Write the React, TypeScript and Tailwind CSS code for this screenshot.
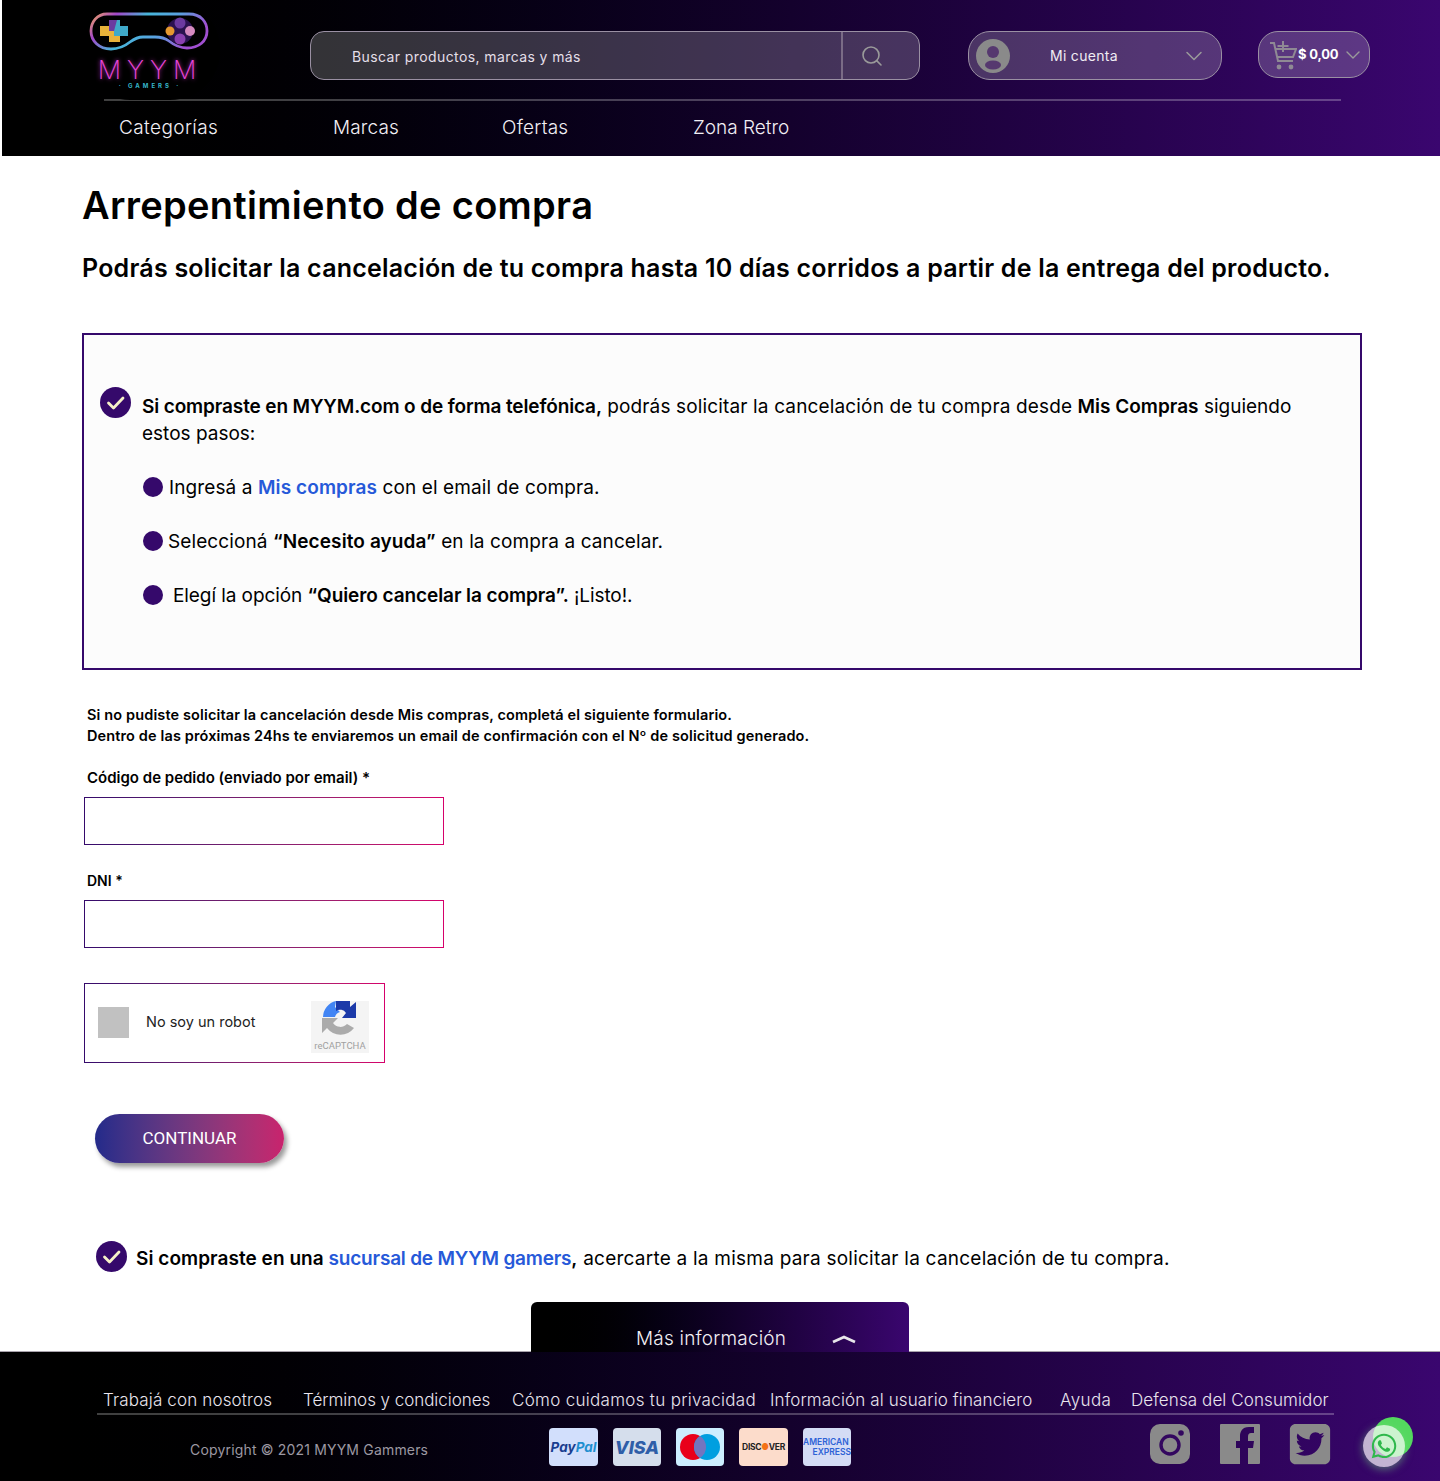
import React from 'react';
import { ChevronDown, Search } from 'lucide-react';
import { FaSquareTwitter, FaWhatsapp } from 'react-icons/fa6';

const navLinks = [
  { label: 'Categorías', className: 'w-[214px] tracking-[0.4px]' },
  { label: 'Marcas', className: 'w-[169px] tracking-[0.15px]' },
  { label: 'Ofertas', className: 'w-[191px] tracking-[0.25px]' },
  { label: 'Zona Retro', className: '' },
];

const footerLinks = [
  { label: 'Trabajá con nosotros', className: 'w-[200px] tracking-[0.15px]' },
  { label: 'Términos y condiciones', className: 'w-[209px] -tracking-[0.05px]' },
  { label: 'Cómo cuidamos tu privacidad', className: 'w-[258px] tracking-[0.3px]' },
  { label: 'Información al usuario financiero', className: 'w-[290px] tracking-[0.12px]' },
  { label: 'Ayuda', className: 'w-[71px] tracking-[0.4px]' },
  { label: 'Defensa del Consumidor', className: 'tracking-[0.1px]' },
];

const Logo = () => (
  <div className="flex h-[100px] w-[140px] shrink-0 flex-col items-center rounded-full bg-black pt-[11px]">
    <svg width="122" height="40" viewBox="0 0 122 40" fill="none">
      <defs>
        <linearGradient id="pad" x1="0" y1="0" x2="1" y2="0.3">
          <stop offset="0" stopColor="#f2a65a" />
          <stop offset="0.2" stopColor="#a347c9" />
          <stop offset="0.45" stopColor="#46b6d9" />
          <stop offset="0.7" stopColor="#5aa0e0" />
          <stop offset="1" stopColor="#a04fd0" />
        </linearGradient>
      </defs>
      <path
        d="M18 3 H100 C112 3 118 11 118 20 C118 30 110 37 98 37 C90 37 85 34 80 30 C76 27 72 26 66 26 H54 C48 26 45 28 41 31 C36 35 30 38 22 38 C10 38 2 30 2 20 C2 11 8 3 18 3 Z"
        stroke="url(#pad)"
        strokeWidth="2.8"
      />
      <path d="M20 9 H31 V15 H39 V25 H31 V31 H20 V25 H11 V15 H20 Z" fill="#e8b23a" />
      <path d="M25 9 H31 V15 H39 V25 H25 Z" fill="#3fa9c9" />
      <path d="M20 9 H28 L25 20 H20 Z" fill="#6b3aa0" />
      <circle cx="91" cy="20" r="13" fill="#2a1250" />
      <circle cx="91" cy="12" r="5.5" fill="#6b3aa0" />
      <circle cx="91" cy="28" r="5.5" fill="#8a3fb0" />
      <circle cx="81" cy="20" r="4.5" fill="#e5982f" />
      <circle cx="101" cy="20" r="5" fill="#d58ac0" />
    </svg>
    <div className="mt-[7px] text-[26px] leading-[24px] font-extralight tracking-[6px] text-[#e845d8] [text-shadow:0_0_4px_#c030c0]">
      MYYM
    </div>
    <div className="mt-[1px] text-[6px] leading-[6px] font-bold tracking-[3px] text-[#37b6c9]">· GAMERS ·</div>
  </div>
);

const UserIcon = () => (
  <svg width="34" height="34" viewBox="0 0 34 34">
    <circle cx="17" cy="17" r="17" fill="#8a8a8a" />
    <circle cx="17" cy="13" r="6" fill="#56386f" />
    <ellipse cx="17" cy="26" rx="8" ry="4.5" fill="#56386f" />
  </svg>
);

const CartIcon = () => (
  <svg width="28" height="30" viewBox="0 0 28 30" fill="none" stroke="#8f8a94" strokeWidth="2">
    <path d="M1 3 H5 L9 21 H24" />
    <path d="M6 9 H27 L24 17 H8" />
    <path d="M14 1 V12 M8.5 6 H19.5" />
    <circle cx="10" cy="27" r="2.4" fill="#8f8a94" stroke="none" />
    <circle cx="22" cy="27" r="2.4" fill="#8f8a94" stroke="none" />
  </svg>
);

const CheckBadge = () => (
  <svg width="31" height="31" viewBox="0 0 31 31" className="shrink-0">
    <circle cx="15.5" cy="15.5" r="15.5" fill="#35096b" />
    <path d="M8.5 16 L13.5 21 L23 11" fill="none" stroke="#f6f1c8" strokeWidth="2.8" strokeLinecap="round" strokeLinejoin="round" />
  </svg>
);

const Step = ({ children, gap }: { children: React.ReactNode; gap: string }) => (
  <div className={`flex h-[54px] items-center ${gap}`}>
    <span className="size-5 shrink-0 rounded-full bg-[#35096b]" />
    <p>{children}</p>
  </div>
);

const GradientField = ({ className }: { className: string }) => (
  <div className={`ml-[84px] bg-gradient-to-r from-[#35096b] to-[#d6006b] p-px ${className}`}>
    <div className="h-full w-full bg-white" />
  </div>
);

const RecaptchaMark = () => (
  <div className="mt-[9px] flex h-[52px] w-[58px] flex-col items-center bg-[#f4f4f4]">
    <svg width="36" height="34" viewBox="0 0 36 34">
      <path d="M14 0 A17 17 0 0 0 1 16 H13 A7 7 0 0 1 18 11 L13 6 Z" fill="#4285f4" />
      <path d="M14 0 H28 V6 L34 1 V17 H20 L24 12 A7 7 0 0 0 14 10 Z" fill="#1c3aa9" />
      <path d="M0 17 H16 L11 22 A9 9 0 0 0 25 23 L32 27 A17 17 0 0 1 5 27 L0 32 Z" fill="#ababab" />
    </svg>
    <span className="mt-1 font-['Roboto',sans-serif] text-[9.5px] leading-[14px] text-[#a0a0a0]">reCAPTCHA</span>
  </div>
);

const InstagramIcon = () => (
  <svg width="40" height="40" viewBox="0 0 40 40">
    <rect width="40" height="40" rx="10" fill="#8a8a8a" />
    <circle cx="20" cy="21" r="9" fill="none" stroke="#33075f" strokeWidth="3.4" />
    <circle cx="31" cy="9" r="2.8" fill="#33075f" />
  </svg>
);

const FacebookIcon = () => (
  <svg width="40" height="40" viewBox="0 0 40 40">
    <path d="M1 0 H39 A1 1 0 0 1 40 1 V39 A1 1 0 0 1 39 40 H28 V24 H33 L34 17 H28 V13 C28 10 29 9 31 9 H34 V3 H29 C22 3 20 8 20 12 V17 H16 V24 H20 V40 H1 A1 1 0 0 1 0 39 V1 A1 1 0 0 1 1 0 Z" fill="#8a8a8a" />
  </svg>
);

const App = () => {
  return (
    <div className="relative h-[1481px] w-[1440px] overflow-hidden bg-white font-['Inter',sans-serif] text-black">
      <div className="pl-[2px]">
        <header className="h-[156px] bg-gradient-to-r from-black to-[#3a066f] text-white">
          <div className="flex h-[99px] items-start pl-[78px]">
            <Logo />
            <div className="mt-[31px] ml-[90px] flex h-[49px] w-[610px] items-center rounded-[14px] border border-[#9a90a3] bg-white/20">
              <span className="flex-1 pt-[2px] pl-[41px] text-[14px] tracking-[0.4px] text-[#e4dfe8]">Buscar productos, marcas y más</span>
              <div className="flex h-full w-[78px] items-center border-l-2 border-[#7a6c86] pl-[17px]">
                <Search size={24} strokeWidth={1.6} className="text-[#9a9a9a]" />
              </div>
            </div>
            <div className="mt-[31px] ml-[48px] flex h-[49px] w-[254px] items-center rounded-[22px] border border-[#9a90a3] bg-white/20 pl-[7px]">
              <UserIcon />
              <span className="ml-[40px] w-[130px] text-[14px] tracking-[0.3px] text-[#f0ecf3]">Mi cuenta</span>
              <ChevronDown size={28} strokeWidth={1.3} className="text-[#9a9a9a]" />
            </div>
            <div className="mt-[31px] ml-[36px] flex h-[47px] w-[112px] items-center rounded-[20px] border border-[#9a90a3] bg-white/20 pl-[10px]">
              <CartIcon />
              <span className="ml-[1px] text-[13px] font-bold tracking-[-0.2px] whitespace-nowrap">$ 0,00</span>
              <ChevronDown size={24} strokeWidth={1.4} className="ml-[3px] text-[#9a9a9a]" />
            </div>
          </div>
          <div className="ml-[102px] h-[2px] w-[1237px] bg-white/25" />
          <nav className="flex pt-[14px] pl-[117px] text-[19px] leading-[26px] font-light text-[#f2eff5]">
            {navLinks.map((link) => (
              <a key={link.label} className={link.className}>
                {link.label}
              </a>
            ))}
          </nav>
        </header>
      </div>

      <main className="h-[1195px]">
        <h1 className="pt-[26px] pl-[82px] text-[38px] leading-[46px] font-semibold tracking-[0.3px]">Arrepentimiento de compra</h1>
        <h2 className="mt-[24px] pl-[82px] text-[25px] leading-[32px] font-semibold tracking-[0.22px] whitespace-nowrap">
          Podrás solicitar la cancelación de tu compra hasta 10 días corridos a partir de la entrega del producto.
        </h2>

        <section className="mt-[49px] ml-[82px] h-[337px] w-[1280px] border-2 border-[#35096b] bg-[#fcfcfc] pt-[52px] text-[19px] leading-[27px]">
          <div className="flex gap-[11px] pl-[16px]">
            <CheckBadge />
            <p className="w-[1170px] pt-[6px]">
              <b className="font-semibold tracking-[-0.13px]">Si compraste en MYYM.com o de forma telefónica,</b>{' '}
              <span className="tracking-[0.15px]">podrás solicitar la cancelación de tu compra desde</span>{' '}
              <b className="font-semibold">Mis Compras</b> siguiendo estos pasos:
            </p>
          </div>
          <div className="mt-[13px] pl-[59px]">
            <Step gap="gap-[6px]">
              <span className="tracking-[0.1px]">
                Ingresá a <b className="font-semibold text-[#2659d9]">Mis compras</b> con el email de compra.
              </span>
            </Step>
            <Step gap="gap-[5px]">
              <span className="tracking-[0.1px]">
                Seleccioná <b className="font-semibold">“Necesito ayuda”</b> en la compra a cancelar.
              </span>
            </Step>
            <Step gap="gap-[10px]">
              <span className="tracking-[-0.08px]">
                Elegí la opción <b className="font-semibold">“Quiero cancelar la compra”.</b> ¡Listo!.
              </span>
            </Step>
          </div>
        </section>

        <p className="mt-[34px] pl-[87px] text-[14.5px] leading-[21px] font-semibold tracking-[0.13px]">
          Si no pudiste solicitar la cancelación desde Mis compras, completá el siguiente formulario.
          <br />
          Dentro de las próximas 24hs te enviaremos un email de confirmación con el Nº de solicitud generado.
        </p>

        <label className="mt-[21px] block pl-[87px] text-[15px] leading-[22px] font-semibold">Código de pedido (enviado por email) *</label>
        <GradientField className="mt-[8px] h-[48px] w-[360px]" />
        <label className="mt-[25px] block pl-[87px] text-[14px] leading-[22px] font-semibold">DNI *</label>
        <GradientField className="mt-[8px] h-[48px] w-[360px]" />

        <div className="mt-[35px] ml-[84px] h-[80px] w-[301px] bg-gradient-to-r from-[#35096b] to-[#d6006b] p-px">
          <div className="flex h-full w-full items-center bg-white pb-[2px] pl-[13px]">
            <div className="size-[31px] bg-[#c1c1c1]" />
            <span className="ml-[17px] w-[165px] text-[14.5px] text-[#222]">No soy un robot</span>
            <RecaptchaMark />
          </div>
        </div>

        <button className="mt-[51px] ml-[95px] flex h-[49px] w-[189px] items-center justify-center rounded-full bg-gradient-to-r from-[#232a8a] to-[#c9226d] pt-px font-['Roboto',sans-serif] text-[17px] text-white shadow-[3px_4px_5px_rgba(0,0,0,0.4)]">
          CONTINUAR
        </button>

        <div className="mt-[78px] flex items-start gap-[9px] pl-[96px] text-[19px] leading-[27px]">
          <CheckBadge />
          <p className="pt-[4px] tracking-[0.23px]">
            <b className="font-semibold tracking-[0.05px]">Si compraste en una </b>
            <b className="font-semibold tracking-[-0.2px] text-[#2659d9]">sucursal de MYYM gamers</b>
            <b className="font-semibold">,</b> acercarte a la misma para solicitar la cancelación de tu compra.
          </p>
        </div>

        <div className="relative z-10 mt-[30px] ml-[531px] flex h-[50px] w-[378px] items-center rounded-t-[6px] bg-gradient-to-r from-black to-[#3a066f] pt-[24px] pl-[105px] text-[19px] font-light tracking-[0.2px] text-[#f2eff5]">
          <span>Más información</span>
          <svg width="26" height="10" viewBox="0 0 26 10" className="ml-[45px]">
            <path d="M2 8 L13 3 L24 8" fill="none" stroke="#e8e6ea" strokeWidth="2.8" />
          </svg>
        </div>
      </main>

      <footer className="h-[130px] border-t border-[#a8a2ab] bg-gradient-to-r from-black to-[#3a066f] text-white">
        <div className="flex pt-[36px] pl-[103px] text-[17px] leading-[24px] font-light whitespace-nowrap text-[#e9e5ee]">
          {footerLinks.map((link) => (
            <a key={link.label} className={link.className}>
              {link.label}
            </a>
          ))}
        </div>
        <div className="mt-[1px] ml-[97px] h-[2px] w-[1237px] bg-white/25" />
        <div className="flex items-start">
          <p className="mt-[25px] ml-[190px] w-[359px] text-[14px] leading-[20px] tracking-[0.17px] text-[#9c98a2]">Copyright © 2021 MYYM Gammers</p>
          <div className="mt-[13px] flex items-center gap-[15px]">
            <div className="flex h-[38px] w-[49px] items-center justify-center rounded-[4px] bg-[#d2dffc] text-[13.5px] font-bold italic">
              <span className="text-[#1a3d8f]">Pay</span>
              <span className="text-[#1f8fd0]">Pal</span>
            </div>
            <div className="flex h-[38px] w-[48px] items-center justify-center rounded-[4px] bg-[#d5deec] text-[18px] font-extrabold italic text-[#2f5ea8]">VISA</div>
            <div className="flex h-[38px] w-[48px] items-center justify-center rounded-[4px] bg-[#cdeeff]">
              <svg width="40" height="30" viewBox="0 0 40 30">
                <circle cx="13" cy="15" r="13" fill="#e9001b" />
                <circle cx="27" cy="15" r="13" fill="#009fe0" />
                <path d="M20 4 A13 13 0 0 1 20 26 A13 13 0 0 1 20 4 Z" fill="#7375bf" />
              </svg>
            </div>
            <div className="flex h-[38px] w-[49px] items-center justify-center rounded-[4px] bg-[#fcdccb] text-[8.5px] font-bold tracking-[-0.3px] text-[#222]">
              DISC<span className="text-[#f47216]">●</span>VER
            </div>
            <div className="flex h-[38px] w-[48px] flex-col justify-center rounded-[4px] bg-[#d4dcf5] text-[8.5px] leading-[10px] font-semibold whitespace-nowrap text-[#2d62d6]">
              <span>AMERICAN</span>
              <span className="text-right">EXPRESS</span>
            </div>
          </div>
          <div className="mt-[9px] ml-[299px] flex gap-[30px] text-[#8a8a8a]">
            <InstagramIcon />
            <FacebookIcon />
            <FaSquareTwitter size={46} className="-mt-[3px] -ml-[3px]" />
          </div>
        </div>
      </footer>

      {/* boton flotante de whatsapp */}
      <div className="absolute top-[1417px] left-[1363px] size-[50px]">
        <div className="absolute top-0 left-[10px] size-10 rounded-full bg-[#54d85f]" />
        <div className="absolute top-[8px] left-0 flex size-[42px] items-center justify-center rounded-full bg-white/70 shadow-[0_2px_8px_rgba(120,230,130,0.5)]">
          <FaWhatsapp size={28} className="text-[#2fb84c]" />
        </div>
      </div>
    </div>
  );
};

export default App;
